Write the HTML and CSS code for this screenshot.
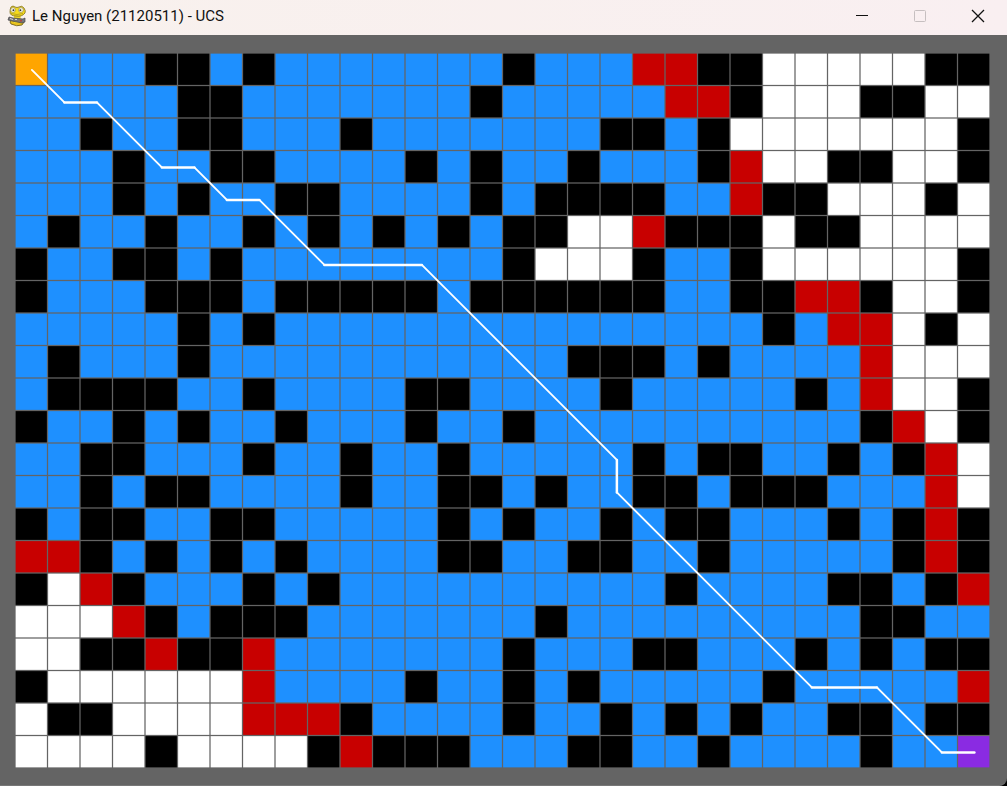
FILE: index.html
```html
<!DOCTYPE html>
<html lang="en">
<head>
<meta charset="utf-8">
<title>Le Nguyen (21120511) - UCS</title>
<link rel="stylesheet" href="styles.css">
</head>
<body>
<div class="window">
  <header class="titlebar">
    <svg class="app-icon" viewBox="0 0 20 22" aria-hidden="true">
      <path d="M4 19 Q2 17 4 15 H15 Q18 18 15 20 Q10 22 4 19Z" fill="#e8c21c" stroke="#67591b" stroke-width=".8"/>
      <path d="M7 9 H14 L13 18 H7Z" fill="#f3d927"/>
      <path d="M3 7 Q3 4 4 2 Q6 0 8 2 Q10 3 12 2 Q15 0 17 3 Q19 6 18 8 Q15 12 9 11 Q3 11 3 7Z" fill="#f6dc1e" stroke="#7c6c20" stroke-width=".8"/>
      <circle cx="6" cy="5" r="2.4" fill="#f4f3e4" stroke="#8b8146" stroke-width=".6"/>
      <circle cx="14" cy="5" r="2.4" fill="#f4f3e4" stroke="#8b8146" stroke-width=".6"/>
      <circle cx="6.4" cy="5.2" r=".9" fill="#333"/>
      <circle cx="13.4" cy="5.2" r=".9" fill="#333"/>
      <path d="M4 8.5 Q10 10.5 16 8.5" fill="none" stroke="#a58e16" stroke-width=".7"/>
      <path d="M2 12 L6 13 L16 14 L18 13 V17 L15 18 L5 16 L1 15Z" fill="#77777a" stroke="#454548" stroke-width=".7"/>
      <path d="M3 13.5 L6 14.5 M8 14.5 H10" stroke="#d2d2d2" stroke-width="1"/>
      <circle cx="14" cy="15.8" r="1" fill="#b4413b"/>
    </svg>
    <h1 class="title">Le Nguyen (21120511) - UCS</h1>
    <div class="controls">
      <button class="control" type="button" aria-label="Minimize">
        <svg class="glyph" viewBox="0 0 14 14"><path d="M1 6.500H13" /></svg>
      </button>
      <button class="control" type="button" aria-label="Maximize" disabled>
        <svg class="glyph" viewBox="0 0 14 14"><rect x="1.500" y="1.500" width="11" height="11" rx="1"/></svg>
      </button>
      <button class="control" type="button" aria-label="Close">
        <svg class="glyph glyph-close" viewBox="0 0 14 14"><path d="M1 1L13 13M13 1L1 13" /></svg>
      </button>
    </div>
  </header>
  <main class="stage">
    <svg class="board" id="board" viewBox="0 0 780 572" role="img" aria-label="Uniform cost search on a grid"></svg>
  </main>
</div>
<script src="board.js"></script>
</body>
</html>
```

FILE: styles.css
```css
* {
  box-sizing: border-box;
}

body {
  margin: 0;
  background: #000;
  font-family: Roboto, "Open Sans", sans-serif;
}

.window {
  display: flex;
  flex-direction: column;
  min-height: 100vh;
  background: #646464;
  border-bottom: 1px solid #777;
  border-bottom-right-radius: 8px;
}

.titlebar {
  display: flex;
  align-items: center;
  height: 35px;
  padding-left: 7px;
  padding-bottom: 3px;
  background: linear-gradient(90deg, #f8f1ed, #f9eff1);
}

.app-icon {
  width: 20px;
  height: 22px;
  margin-right: 5px;
}

.title {
  flex: 1;
  margin: 0;
  color: #111;
  font-size: 15px;
  font-weight: 400;
  line-height: 20px;
}

.controls {
  display: flex;
  align-self: stretch;
}

.control {
  display: flex;
  align-items: center;
  justify-content: center;
  width: 58px;
  padding: 0;
  border: 0;
  background: none;
}

.glyph {
  width: 14px;
  height: 14px;
  overflow: visible;
  fill: none;
  stroke: #111;
}

.glyph-close {
  stroke-width: 1.3;
}

.control:disabled .glyph {
  stroke: #c6bfc0;
}

.stage {
  flex: 1;
  padding: 18px 17px 17px 15px;
}

.board {
  display: block;
  width: 100%;
}

.open { fill: #fff; }
.wall { fill: #000; }
.visited { fill: #1e90ff; }
.frontier { fill: #c80000; }
.start { fill: #ffa500; }
.goal { fill: #8a2be2; }

.route {
  fill: none;
  stroke: #fff;
  stroke-width: 2;
  stroke-linecap: round;
}

.route-diagonal {
  stroke-width: 1.5;
}
```

FILE: board.js
```js
const rows = [
  "S...##.#.......#...rr##ooooo##",
  ".....##.......#.....rr#ooo##oo",
  "..#..##...#.......##.#ooooooo#",
  "...#..##....#.#..#...#roo##oo#",
  "...#.#..##....#.####..r##ooo#o",
  ".#..#..#.#.#.#.##oor###o##oooo",
  "#..##.#........#ooo#..#oooooo#",
  "#...###.#####.######..##rr#oo#",
  ".....#.#...............#.rro#o",
  ".#...#...........###.#....rooo",
  ".####..#....##....#.....#.roo#",
  "#..#.#..#...#..#..........#ro#",
  "..##...#..#..#.....#.##..#.#ro",
  "..#.##....#..##.#..##.###...ro",
  "#.##..##.....#.#..#.##...#.#r#",
  "rr#.#.#.#....##..##..#.....#r#",
  "#or#...#.#..........#....##.#r",
  "ooor#.###.......#.........##..",
  "oo##r##r.......#...##...#.#.##",
  "#oooooor....#..#.#.....#.....r",
  "o##oooorrr#....#..#.#.#..##.##",
  "oooo#oooo#r###...##..#....#..G"
];

const kinds = {
  ".": "visited", "#": "wall", "o": "open",
  "r": "frontier", "S": "start", "G": "goal"
};

const route = [
  [0, 0], [1, 1], [2, 1], [4, 3], [5, 3], [6, 4], [7, 4], [9, 6], [12, 6],
  [18, 12], [18, 13], [24, 19], [26, 19], [28, 21], [29, 21]
];

const PITCH = 26;
const CELL = 25;
const INSET = 0.5;
const board = document.getElementById("board");

function add(tag, attributes) {
  const node = document.createElementNS("http://www.w3.org/2000/svg", tag);
  for (const name in attributes) node.setAttribute(name, attributes[name]);
  board.appendChild(node);
}

rows.forEach((row, r) => {
  [...row].forEach((mark, c) => {
    add("rect", {
      class: kinds[mark],
      x: c * PITCH + INSET, y: r * PITCH + INSET,
      width: CELL, height: CELL
    });
  });
});

const centre = (n) => n * PITCH + PITCH / 2 + INSET;

route.slice(1).forEach(([c, r], i) => {
  const [pc, pr] = route[i];
  const diagonal = c !== pc && r !== pr;
  add("line", {
    class: diagonal ? "route route-diagonal" : "route",
    x1: centre(pc), y1: centre(pr), x2: centre(c), y2: centre(r)
  });
});
```
